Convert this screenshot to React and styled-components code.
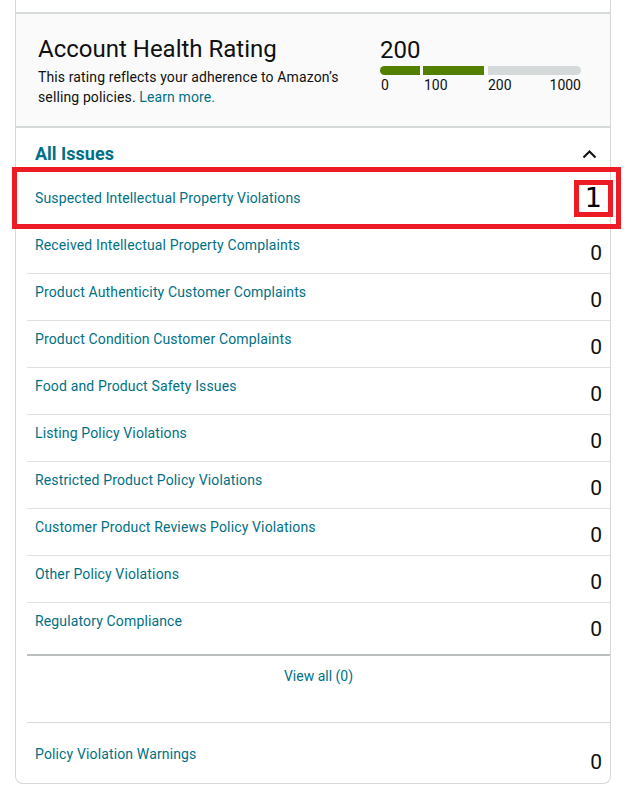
import React from 'react';
import styled, { createGlobalStyle } from 'styled-components';

const GlobalStyle = createGlobalStyle`
  body {
    margin: 0;
    background: #fff;
    font-family: Roboto, "Liberation Sans", sans-serif;
    color: #0f1111;
  }
`;

const Page = styled.div`
  position: relative;
  width: 627px;
  padding: 0 16px 6px 15px;
  box-sizing: border-box;
`;

const Card = styled.div`
  border: 1px solid #d5d9d9;
  border-top: none;
  border-radius: 0 0 8px 8px;
  background: #fff;
`;

const TopGap = styled.div`
  height: 12px;
`;

const Summary = styled.section`
  display: flex;
  height: 91px;
  padding: 21px 0 0 22px;
  background: #fafafa;
  border-top: 2px solid #d5d9d9;
  border-bottom: 2px solid #d5d9d9;
`;

const SummaryText = styled.div`
  width: 342px;
`;

const Title = styled.h2`
  margin: 0 0 4px;
  font-size: 24px;
  line-height: 28px;
  font-weight: 400;
`;

const Blurb = styled.p`
  margin: 0;
  font-size: 14px;
  line-height: 20px;
  letter-spacing: 0.12px;
  width: 320px;
`;

const Link = styled.a`
  color: #007185;
  text-decoration: none;
`;

const Score = styled.div`
  width: 202px;
`;

const ScoreValue = styled.div`
  font-size: 24px;
  line-height: 28px;
  margin: 1px 0 2px;
`;

const Scale = styled.div`
  display: grid;
  grid-template-columns: 40px 61px 94px;
  column-gap: 3px;
  & > :nth-child(3) {
    margin-left: 1px;
  }
`;

const Segment = styled.div`
  height: 9px;
  background: ${(p) => (p.$filled ? '#538000' : '#d5d9d9')};
  border-radius: ${(p) => p.$round || '0'};
`;

const Tick = styled.div`
  display: flex;
  justify-content: space-between;
  font-size: 14px;
  line-height: 20px;
  padding-left: ${(p) => p.$pad || '0'};
`;

const IssuesHeader = styled.div`
  display: flex;
  align-items: flex-start;
  justify-content: space-between;
  height: 52px;
  padding: 14px 13px 0 19px;
  box-sizing: border-box;
`;

const HeaderTitle = styled.h3`
  margin: 0;
  font-size: 18px;
  line-height: 24px;
  font-weight: 700;
  color: #007185;
`;

const Chevron = styled.svg`
  width: 15px;
  height: 9px;
  margin-top: 8px;
`;

const List = styled.div`
  margin-left: 11px;
`;

const Row = styled.div`
  display: flex;
  justify-content: space-between;
  align-items: flex-start;
  height: ${(p) => p.$height || '47px'};
  padding: ${(p) => p.$top || '8px'} 8px 0 8px;
  box-sizing: border-box;
  border-bottom: ${(p) => (p.$last ? 'none' : '1px solid #dfe1e1')};
`;

const RowLabel = styled.a`
  font-size: 14px;
  line-height: 20px;
  letter-spacing: 0.14px;
  color: #007185;
  text-decoration: none;
`;

const Count = styled.span`
  font-size: 21px;
  line-height: 24px;
  margin-top: 6px;
`;

const FlaggedCount = styled.span`
  font-family: "DejaVu Sans", sans-serif;
  font-size: 27px;
  line-height: 28px;
  margin-top: -4px;
  color: #000;
`;

const ViewAll = styled.div`
  height: 69px;
  padding-top: 10px;
  box-sizing: border-box;
  border-top: 2px solid #bbbfbf;
  border-bottom: 1px solid #d5d9d9;
  text-align: center;
  font-size: 14px;
  line-height: 20px;
`;

const Highlight = styled.div`
  position: absolute;
  border: 5px solid #ed1c24;
  box-sizing: border-box;
  pointer-events: none;
`;

const issues = [
  'Suspected Intellectual Property Violations',
  'Received Intellectual Property Complaints',
  'Product Authenticity Customer Complaints',
  'Product Condition Customer Complaints',
  'Food and Product Safety Issues',
  'Listing Policy Violations',
  'Restricted Product Policy Violations',
  'Customer Product Reviews Policy Violations',
  'Other Policy Violations',
  'Regulatory Compliance',
];

const App = () => (
  <Page>
    <GlobalStyle />
    <Card>
      <TopGap />
      <Summary>
        <SummaryText>
          <Title>Account Health Rating</Title>
          <Blurb>
            This rating reflects your adherence to Amazon’s selling policies.{' '}
            <Link href="#learn">Learn more.</Link>
          </Blurb>
        </SummaryText>
        <Score>
          <ScoreValue>200</ScoreValue>
          <Scale>
            <Segment $filled $round="5px 0 0 5px" />
            <Segment $filled />
            <Segment $round="0 5px 5px 0" />
          </Scale>
          <Scale>
            <Tick $pad="1px">0</Tick>
            <Tick $pad="1px">100</Tick>
            <Tick>
              <span>200</span>
              <span>1000</span>
            </Tick>
          </Scale>
        </Score>
      </Summary>

      <IssuesHeader>
        <HeaderTitle>All Issues</HeaderTitle>
        <Chevron viewBox="0 0 15 9" fill="none">
          <polyline points="1.5,7.5 7.5,1.5 13.5,7.5" stroke="#0f1111" strokeWidth="2" />
        </Chevron>
      </IssuesHeader>

      <List>
        {issues.map((label, i) => (
          <Row key={label} $last={i === issues.length - 1} $height={i === issues.length - 1 ? '51px' : '47px'}>
            <RowLabel href="#issue">{label}</RowLabel>
            {i === 0 ? <FlaggedCount>1</FlaggedCount> : <Count>0</Count>}
          </Row>
        ))}
        <ViewAll>
          <Link href="#all">View all (0)</Link>
        </ViewAll>
        <Row $last $height="60px" $top="21px">
          <RowLabel href="#warnings">Policy Violation Warnings</RowLabel>
          <Count>0</Count>
        </Row>
      </List>
    </Card>

    <Highlight style={{ left: 12, top: 167, width: 609, height: 62 }} />
    <Highlight style={{ left: 574, top: 180, width: 39, height: 37 }} />
  </Page>
);

export default App;
